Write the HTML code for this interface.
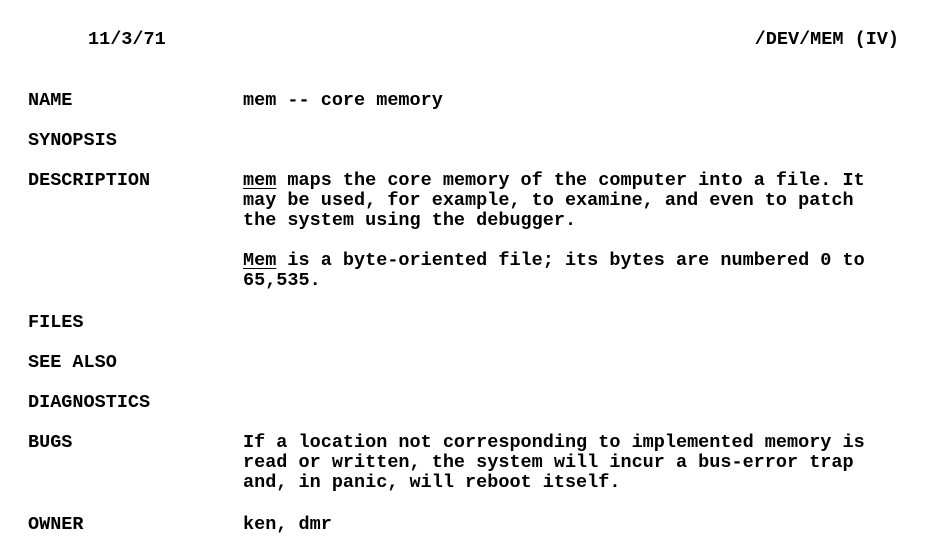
<!DOCTYPE html>
<html><head><meta charset="utf-8"><style>
html,body{margin:0;padding:0;background:#fff;width:929px;height:557px;overflow:hidden}
body{position:relative;font-family:"Liberation Mono",monospace;font-weight:bold;font-size:18.5px;color:#000}
.t{position:absolute;line-height:20px;white-space:pre}
u{text-decoration:underline;text-underline-offset:3px;text-decoration-thickness:1px}
</style></head><body>
<div class="t" style="left:88px;top:30px">11/3/71</div>
<div class="t" style="right:30px;top:30px">/DEV/MEM (IV)</div>
<div class="t" style="left:28px;top:91px">NAME</div>
<div class="t" style="left:243px;top:91px">mem -- core memory</div>
<div class="t" style="left:28px;top:131px">SYNOPSIS</div>
<div class="t" style="left:28px;top:171px">DESCRIPTION</div>
<div class="t" style="left:243px;top:171px"><u>mem</u> maps the core memory of the computer into a file. It
may be used, for example, to examine, and even to patch
the system using the debugger.

<u>Mem</u> is a byte-oriented file; its bytes are numbered 0 to
65,535.</div>
<div class="t" style="left:28px;top:313px">FILES</div>
<div class="t" style="left:28px;top:353px">SEE ALSO</div>
<div class="t" style="left:28px;top:393px">DIAGNOSTICS</div>
<div class="t" style="left:28px;top:433px">BUGS</div>
<div class="t" style="left:243px;top:433px">If a location not corresponding to implemented memory is
read or written, the system will incur a bus-error trap
and, in panic, will reboot itself.</div>
<div class="t" style="left:28px;top:515px">OWNER</div>
<div class="t" style="left:243px;top:515px">ken, dmr</div>
</body></html>
